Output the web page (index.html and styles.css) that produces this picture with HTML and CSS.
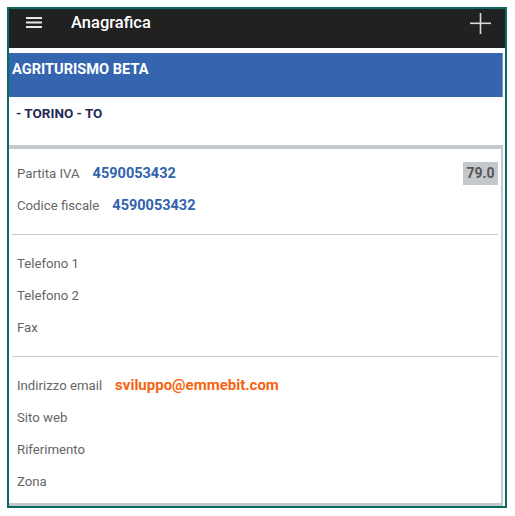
FILE: index.html
```html
<!DOCTYPE html>
<html lang="it">
<head>
    <meta charset="UTF-8">
    <meta name="viewport" content="width=device-width, initial-scale=1.0">
    <title>Anagrafica</title>
    <link rel="stylesheet" href="styles.css">
</head>
<body>
    <div class="frame">
        <div class="toolbar">
            <svg class="menu-icon" width="16" height="11" viewBox="0 0 16 11">
                <rect x="0" y="0" width="16" height="2" fill="#e8e8e8"/>
                <rect x="0" y="4.5" width="16" height="2" fill="#e8e8e8"/>
                <rect x="0" y="9" width="16" height="2" fill="#e8e8e8"/>
            </svg>
            <span class="toolbar-title">Anagrafica</span>
            <svg class="add-icon" width="21" height="21" viewBox="0 0 21 21">
                <rect x="0" y="9.5" width="21" height="1.6" fill="#d9d9d9"/>
                <rect x="9.7" y="0" width="1.6" height="21" fill="#d9d9d9"/>
            </svg>
        </div>

        <div class="content">
            <div class="company-name">AGRITURISMO BETA</div>
            <div class="company-city">- TORINO - TO</div>

            <div class="card">
                <div class="row">
                    <span class="label">Partita IVA</span>
                    <span class="value">4590053432</span>
                    <span class="badge">79.0</span>
                </div>
                <div class="row">
                    <span class="label">Codice fiscale</span>
                    <span class="value">4590053432</span>
                </div>

                <div class="divider"></div>

                <div class="row"><span class="label">Telefono 1</span></div>
                <div class="row"><span class="label">Telefono 2</span></div>
                <div class="row"><span class="label">Fax</span></div>

                <div class="divider"></div>

                <div class="row">
                    <span class="label">Indirizzo email</span>
                    <span class="value email">sviluppo@emmebit.com</span>
                </div>
                <div class="row"><span class="label">Sito web</span></div>
                <div class="row"><span class="label">Riferimento</span></div>
                <div class="row"><span class="label">Zona</span></div>
            </div>
        </div>
    </div>
</body>
</html>
```

FILE: styles.css
```css
* {
    margin: 0;
    padding: 0;
    box-sizing: border-box;
}

body {
    font-family: Roboto, 'Noto Sans', sans-serif;
    background: white;
}

.frame {
    margin: 7px 0 0 7px;
    width: 500px;
    height: 501px;
    border: 2px solid #0b6b62;
    background: white;
    display: flex;
    flex-direction: column;
}

.toolbar {
    height: 39px;
    background: #212121;
    display: flex;
    align-items: flex-start;
    padding: 0 14px 0 17px;
}

.menu-icon {
    margin-top: 8px;
}

.toolbar-title {
    color: white;
    font-size: 16.5px;
    font-weight: 500;
    margin: 4px 0 0 29px;
    flex: 1;
}

.add-icon {
    margin-top: 4px;
}

.content {
    flex: 1;
    padding: 5px 2px 0 0;
    display: flex;
    flex-direction: column;
}

.company-name {
    height: 44px;
    background: #3465ae;
    border-right: 1px solid #6f94cc;
    color: white;
    font-size: 14.6px;
    font-weight: bold;
    padding: 7px 0 0 3px;
}

.company-city {
    height: 48px;
    color: #1f2a55;
    font-size: 13.5px;
    font-weight: bold;
    padding: 8px 0 0 7px;
}

.card {
    flex: 1;
    border-top: 4px solid #c3c9cc;
    border-right: 2px solid #c3c8cb;
    border-bottom: 3px solid #c3c8cb;
    padding: 8px 0 0 0;
}

.row {
    height: 32px;
    display: flex;
    align-items: center;
    padding: 0 3px 0 8px;
}

.label {
    color: #666;
    font-size: 13.2px;
}

.value {
    color: #3163ad;
    font-size: 14.5px;
    font-weight: bold;
    margin-left: 13px;
}

.email {
    color: #f5640f;
    font-size: 15px;
}

.badge {
    margin-left: auto;
    background: #c2c8cc;
    color: #555;
    font-size: 14px;
    font-weight: bold;
    width: 35px;
    height: 23px;
    display: flex;
    align-items: center;
    justify-content: center;
}

.divider {
    height: 1px;
    background: #c8c8c8;
    margin: 13px 3px 12px 3px;
}
```
